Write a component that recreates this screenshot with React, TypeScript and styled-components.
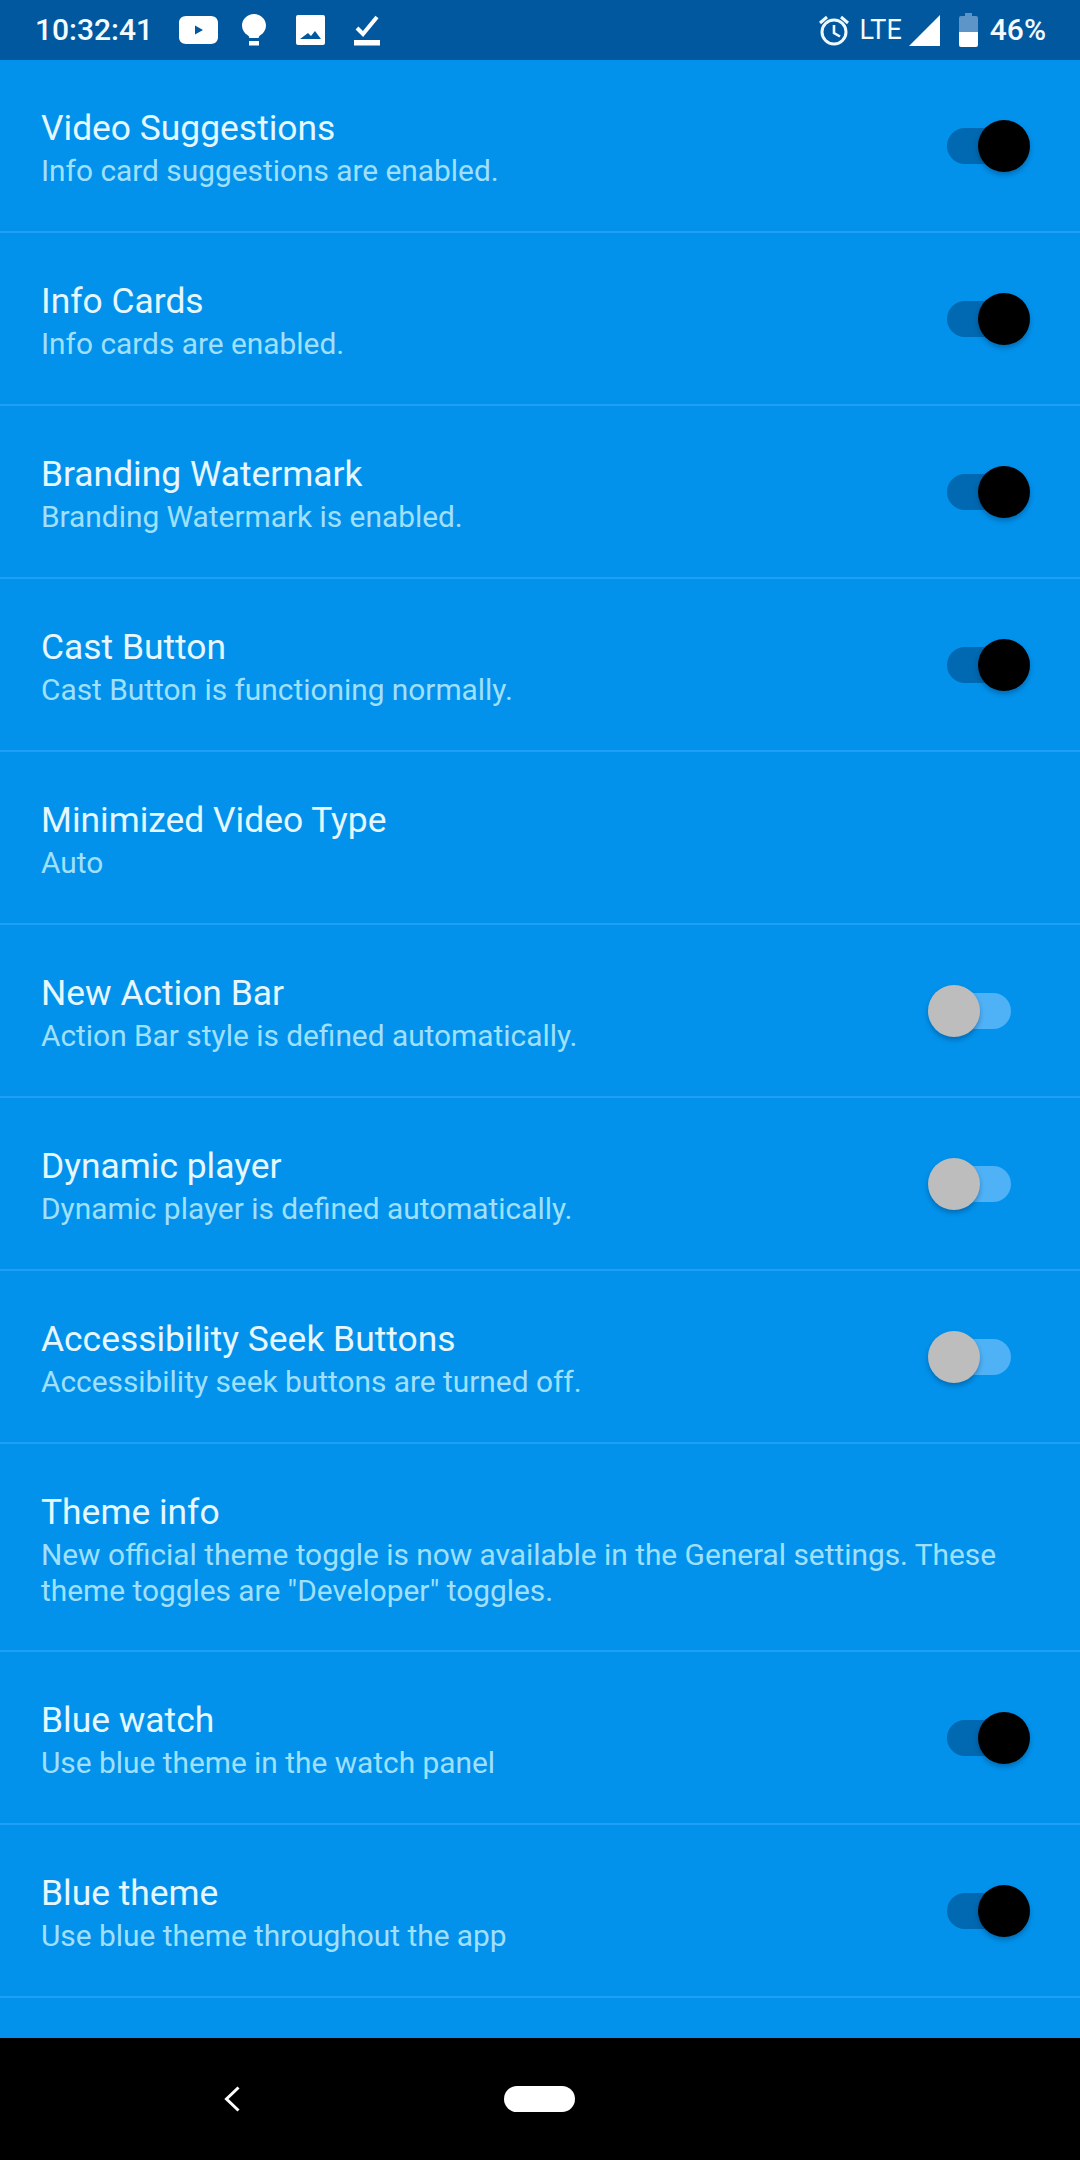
import React from "react";
import styled, { createGlobalStyle } from "styled-components";

const Global = createGlobalStyle`
  html, body { margin: 0; padding: 0; background: #000; }
  * { box-sizing: border-box; }
`;

const Screen = styled.div`
  width: 1080px;
  height: 2160px;
  display: flex;
  flex-direction: column;
  overflow: hidden;
  font-family: Roboto, "Liberation Sans", sans-serif;
  background: #0292ec;
`;

const StatusBar = styled.header`
  flex: 0 0 60px;
  height: 60px;
  display: flex;
  align-items: center;
  justify-content: space-between;
  padding: 0 34px 0 35px;
  background: #01589f;
  color: #fff;
`;

const StatusGroup = styled.div`
  display: flex;
  align-items: center;
`;

const StatusText = styled.span<{ $gap?: number; $weight?: number; $size?: number }>`
  font-size: ${(p) => p.$size ?? 30}px;
  line-height: 60px;
  font-weight: ${(p) => p.$weight ?? 500};
  margin-left: ${(p) => p.$gap ?? 0}px;
  color: #f4fbff;
`;

const StatusIcon = styled.svg<{ $gap: number }>`
  display: block;
  margin-left: ${(p) => p.$gap}px;
  flex: none;
`;

const List = styled.main`
  flex: 1;
  display: flex;
  flex-direction: column;
  min-height: 0;
`;

const Row = styled.section<{ $tall?: boolean }>`
  flex: none;
  height: ${(p) => (p.$tall ? 208 : 173)}px;
  display: flex;
  align-items: center;
  justify-content: space-between;
  padding: 0 50px 0 41px;
  border-bottom: 2px solid #1ea0f8;
`;

const RowText = styled.div`
  display: flex;
  flex-direction: column;
  gap: 3px;
  padding-top: 4px;
  min-width: 0;
`;

const Title = styled.div`
  font-size: 35.4px;
  line-height: 44px;
  color: #e6f7ff;
`;

const Subtitle = styled.div`
  font-size: 29.85px;
  line-height: 36px;
  color: #a0e0fc;
`;

const Track = styled.div<{ $on: boolean }>`
  position: relative;
  flex: none;
  width: 64px;
  height: 36px;
  border-radius: 18px;
  margin-right: 19px;
  background: ${(p) => (p.$on ? "#0069b1" : "#4fb2f7")};
`;

const Thumb = styled.div<{ $on: boolean }>`
  position: absolute;
  top: -8px;
  ${(p) => (p.$on ? "right: -19px;" : "left: -19px;")}
  width: 52px;
  height: 52px;
  border-radius: 50%;
  background: ${(p) => (p.$on ? "#000" : "#bdbdbd")};
  box-shadow: 0 3px 5px rgba(0, 40, 80, 0.35);
`;

const NavBar = styled.nav`
  flex: 0 0 122px;
  height: 122px;
  display: flex;
  align-items: center;
  padding: 0 0 0 224px;
  background: #000;
`;

const Pill = styled.div`
  width: 71px;
  height: 26px;
  border-radius: 13px;
  background: #fff;
  margin-left: 264px;
`;

type Item = { title: string; sub: React.ReactNode; toggle?: boolean; tall?: boolean };

const items: Item[] = [
  { title: "Video Suggestions", sub: "Info card suggestions are enabled.", toggle: true },
  { title: "Info Cards", sub: "Info cards are enabled.", toggle: true },
  { title: "Branding Watermark", sub: "Branding Watermark is enabled.", toggle: true },
  { title: "Cast Button", sub: "Cast Button is functioning normally.", toggle: true },
  { title: "Minimized Video Type", sub: "Auto" },
  { title: "New Action Bar", sub: "Action Bar style is defined automatically.", toggle: false },
  { title: "Dynamic player", sub: "Dynamic player is defined automatically.", toggle: false },
  { title: "Accessibility Seek Buttons", sub: "Accessibility seek buttons are turned off.", toggle: false },
  {
    title: "Theme info",
    sub: (
      <>
        New official theme toggle is now available in the General settings. These
        <br />
        theme toggles are "Developer" toggles.
      </>
    ),
    tall: true,
  },
  { title: "Blue watch", sub: "Use blue theme in the watch panel", toggle: true },
  { title: "Blue theme", sub: "Use blue theme throughout the app", toggle: true },
];

export default function App() {
  return (
    <Screen>
      <Global />
      <StatusBar>
        <StatusGroup>
          <StatusText>10:32:41</StatusText>
          <StatusIcon $gap={26} width="39" height="28" viewBox="0 0 39 28">
            <path fill="#fff" fillRule="evenodd" d="M7 0h25c3.800 0 7 2.800 7 6.500v15c0 3.700-3.200 6.500-7 6.500H7c-3.800 0-7-2.800-7-6.500v-15C0 2.800 3.200 0 7 0zM16 9.500v9l8-4.500z" />
          </StatusIcon>
          <StatusIcon $gap={24} width="24" height="32" viewBox="0 0 24 32">
            <path fill="#fff" d="M12 0C5.400 0 0 5.200 0 11.600c0 4.100 2.200 7.600 5.700 9.700.8.500 1.600 1.500 1.600 2.700h9.400c0-1.200.8-2.200 1.600-2.700 3.500-2.100 5.700-5.600 5.700-9.700C24 5.200 18.600 0 12 0z" />
            <rect x="7" y="27" width="10" height="4.500" fill="#fff" />
          </StatusIcon>
          <StatusIcon $gap={30} width="29" height="30" viewBox="0 0 29 30">
            <path fill="#fff" fillRule="evenodd" d="M2 0h25a2 2 0 0 1 2 2v26a2 2 0 0 1-2 2H2a2 2 0 0 1-2-2V2a2 2 0 0 1 2-2zM4 24h21l-6-8-4 5-3-3z" />
          </StatusIcon>
          <StatusIcon $gap={29} width="26" height="32" viewBox="0 0 26 32">
            <path fill="none" stroke="#fff" strokeWidth="4" d="M3 14l6 6L23 3" />
            <rect x="0" y="26" width="26" height="5.500" fill="#fff" />
          </StatusIcon>
        </StatusGroup>
        <StatusGroup>
          <StatusIcon $gap={0} width="32" height="32" viewBox="0 0 32 32">
            <circle cx="16" cy="18" r="12" fill="none" stroke="#eef9ff" strokeWidth="3" />
            <path fill="none" stroke="#eef9ff" strokeWidth="2.600" d="M16 11v8l6 3.500" />
            <path fill="none" stroke="#eef9ff" strokeWidth="3" d="M2 9l7-6M30 9l-7-6" />
          </StatusIcon>
          <StatusText $gap={9} $weight={400} $size={27}>LTE</StatusText>
          <StatusIcon $gap={7} width="31" height="31" viewBox="0 0 31 31">
            <path fill="#fff" d="M31 0v31H0z" />
          </StatusIcon>
          <StatusIcon $gap={19} width="19" height="34" viewBox="0 0 19 34">
            <path fill="#5e95c8" d="M6 0h7v3h4a2 2 0 0 1 2 2v14H0V5a2 2 0 0 1 2-2h4z" />
            <path fill="#fff" d="M0 19h19v13a2 2 0 0 1-2 2H2a2 2 0 0 1-2-2z" />
          </StatusIcon>
          <StatusText $gap={12}>46%</StatusText>
        </StatusGroup>
      </StatusBar>
      <List>
        {items.map((it) => (
          <Row key={it.title} $tall={it.tall}>
            <RowText>
              <Title>{it.title}</Title>
              <Subtitle>{it.sub}</Subtitle>
            </RowText>
            {it.toggle !== undefined && (
              <Track $on={it.toggle}>
                <Thumb $on={it.toggle} />
              </Track>
            )}
          </Row>
        ))}
      </List>
      <NavBar>
        <svg width="16" height="26" viewBox="0 0 16 26">
          <path fill="none" stroke="#fff" strokeWidth="3" d="M14.500 1.500L2.500 13l12 11.500" />
        </svg>
        <Pill />
      </NavBar>
    </Screen>
  );
}
